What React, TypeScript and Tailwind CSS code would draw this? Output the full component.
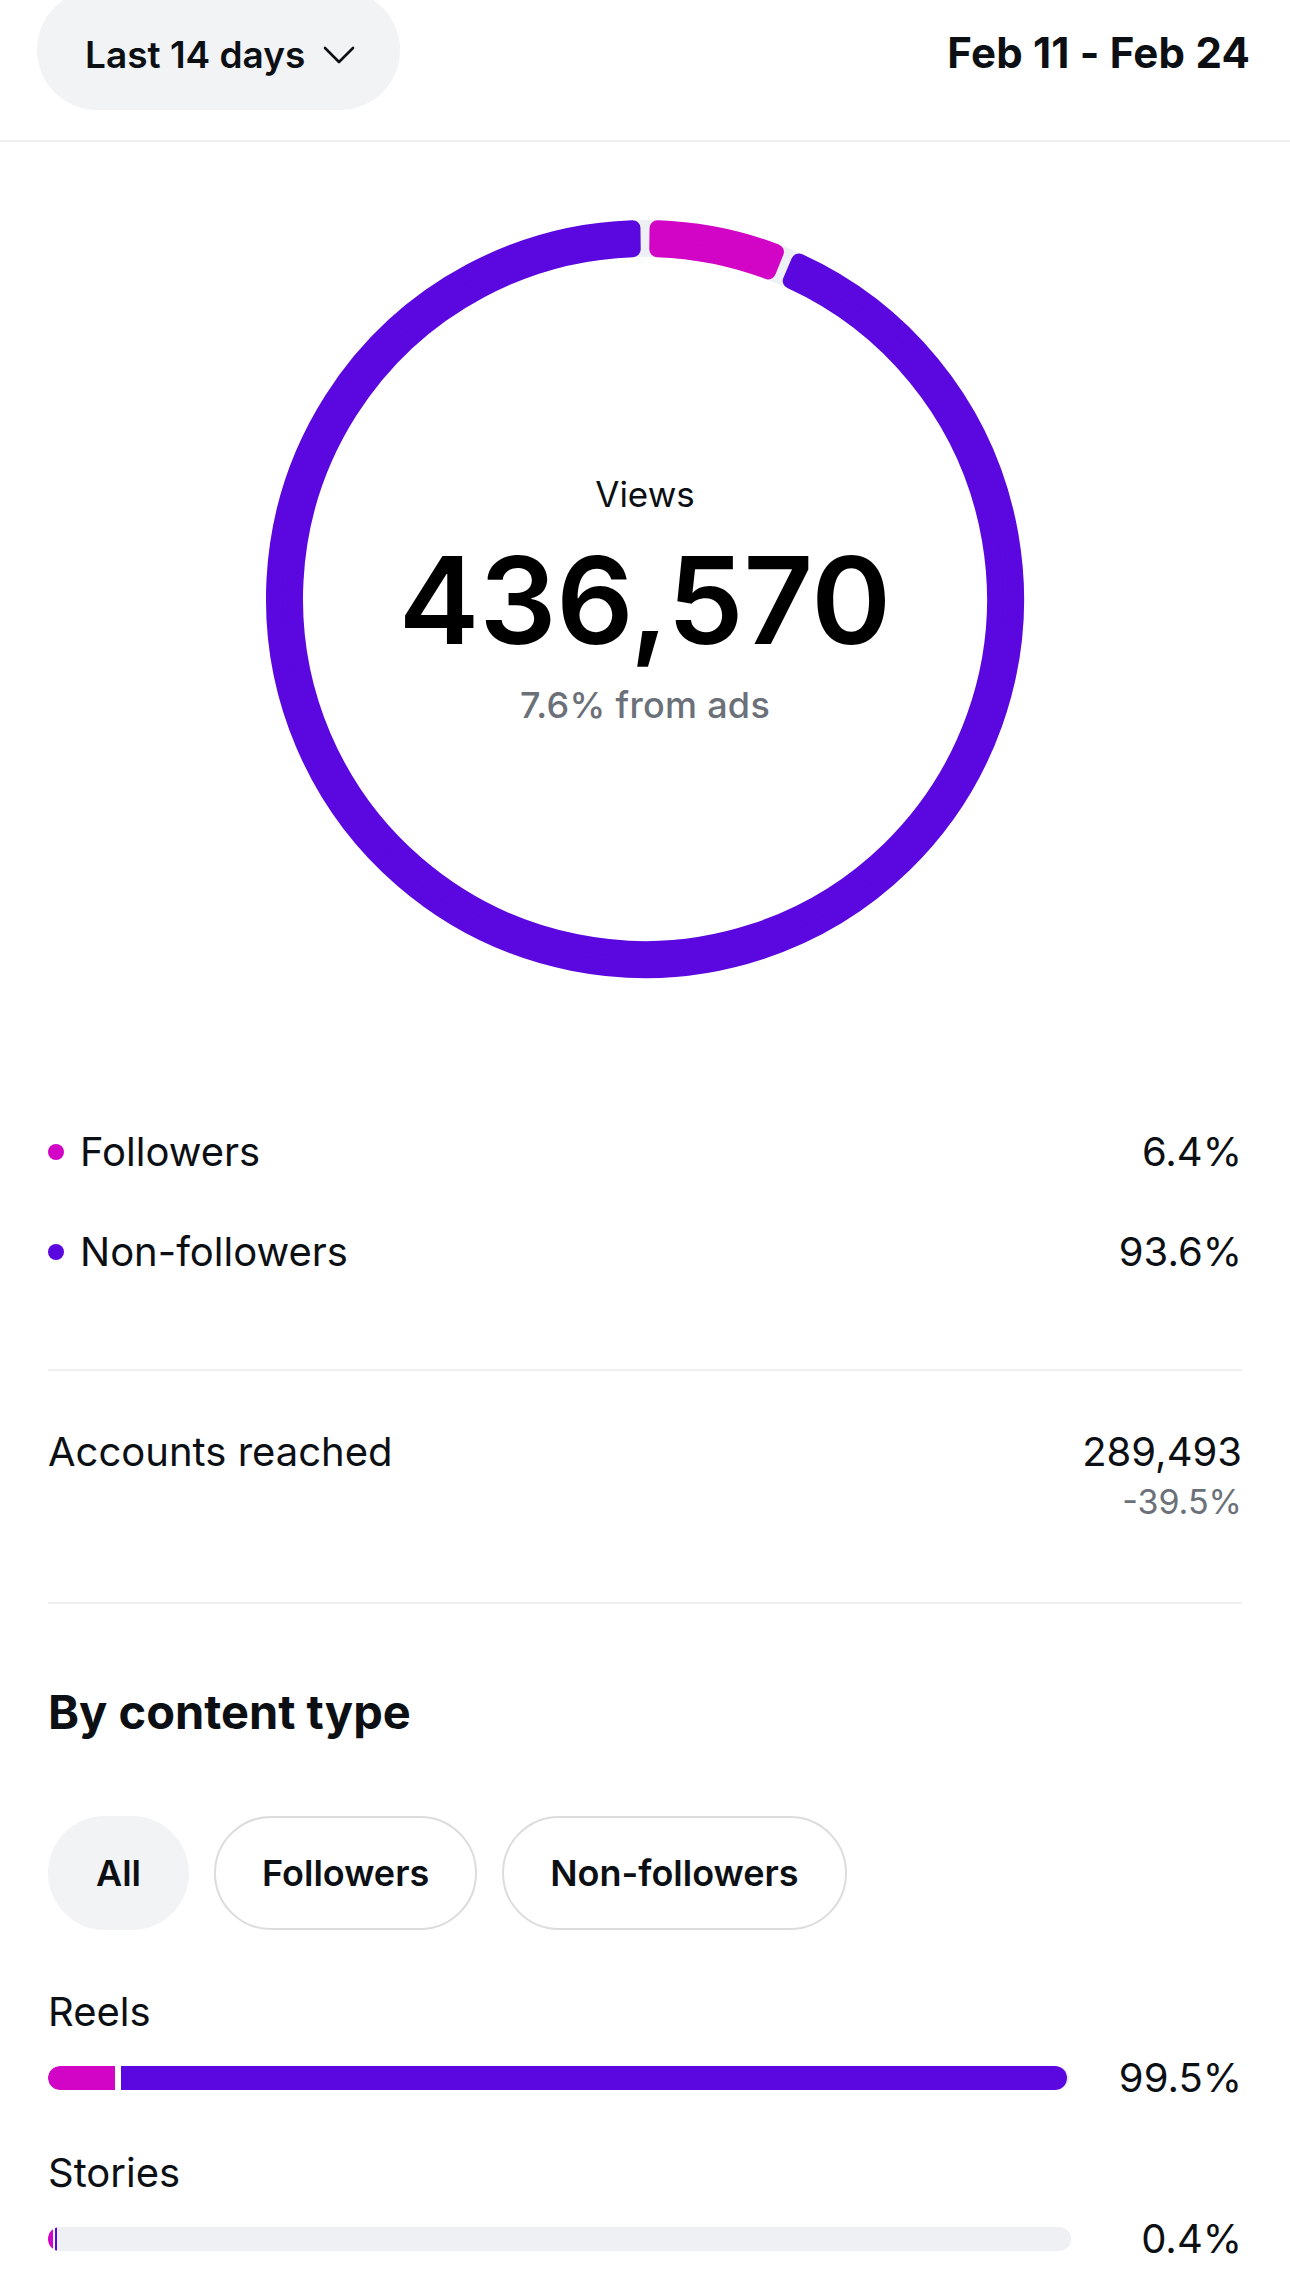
import React from "react";

const PURPLE = "#5a08df";
const PINK = "#d204c6";

// Annular sector with softened corners: the shape is inset by `pad`, then
// stroked with the same colour and round joins so each corner gets radius `pad`.
function sectorPath(
  cx: number,
  cy: number,
  r0: number,
  r1: number,
  a0: number,
  a1: number,
  pad: number
) {
  const ri = r0 + pad;
  const ro = r1 - pad;
  const rad = (d: number) => (d * Math.PI) / 180;
  const pt = (r: number, a: number) => [cx + r * Math.sin(a), cy - r * Math.cos(a)];
  const so = Math.asin(pad / ro);
  const si = Math.asin(pad / ri);
  const o0 = rad(a0) + so;
  const o1 = rad(a1) - so;
  const i0 = rad(a0) + si;
  const i1 = rad(a1) - si;
  const large = o1 - o0 > Math.PI ? 1 : 0;
  const largeI = i1 - i0 > Math.PI ? 1 : 0;
  const [x1, y1] = pt(ro, o0);
  const [x2, y2] = pt(ro, o1);
  const [x3, y3] = pt(ri, i1);
  const [x4, y4] = pt(ri, i0);
  return `M ${x1} ${y1} A ${ro} ${ro} 0 ${large} 1 ${x2} ${y2} L ${x3} ${y3} A ${ri} ${ri} 0 ${largeI} 0 ${x4} ${y4} Z`;
}

function Donut() {
  const c = 380;
  const rIn = 342;
  const rOut = 379;
  const pad = 8;
  const segs = [
    { a0: 0.7, a1: 21.9, color: PINK },
    { a0: 23.3, a1: 359.3, color: PURPLE },
  ];
  return (
    <svg width={760} height={760} viewBox="0 0 760 760">
      <circle cx={c} cy={c} r={(rIn + rOut) / 2} fill="none" stroke="#eef1f4" strokeWidth={rOut - rIn} />
      {segs.map((s, i) => (
        <path
          key={i}
          d={sectorPath(c, c, rIn, rOut, s.a0, s.a1, pad)}
          fill={s.color}
          stroke={s.color}
          strokeWidth={pad * 2}
          strokeLinejoin="round"
        />
      ))}
    </svg>
  );
}

function LegendRow({ color, label, value }: { color: string; label: string; value: string }) {
  return (
    <div className="flex h-[100px] items-center justify-between">
      <div className="flex items-center gap-[16px]">
        <span className="h-[16px] w-[16px] rounded-full" style={{ backgroundColor: color }} />
        <span className="text-[40px] leading-[48px]">{label}</span>
      </div>
      <span className="text-[40px] leading-[48px]">{value}</span>
    </div>
  );
}

function Chip({ label, active }: { label: string; active?: boolean }) {
  return (
    <div
      className={
        active
          ? "flex h-[114px] items-center rounded-full border-2 border-transparent bg-[#f2f3f5] px-[46px] text-[36px] font-semibold"
          : "flex h-[114px] items-center rounded-full border-2 border-[#dcdcdc] bg-white px-[46px] text-[36px] font-semibold"
      }
    >
      {label}
    </div>
  );
}

export default function App() {
  return (
    <div
      className="min-h-[2293px] w-[1290px] overflow-hidden bg-white text-[#0c1014]"
      style={{ fontFamily: "Inter, 'Noto Sans', sans-serif" }}
    >
      {/* Header: period selector + date range */}
      <div className="flex h-[142px] items-start justify-between border-b-2 border-[#eef0f3] pl-[37px] pr-[40px]">
        <div className="-mt-[10px] flex h-[120px] w-[363px] items-center gap-[18px] rounded-full bg-[#f2f3f5] pl-[48px] pt-[10px]">
          <span className="text-[37px] font-semibold leading-[44px]">Last 14 days</span>
          <svg width="32" height="18" viewBox="0 0 32 18" fill="none">
            <path d="M2 2 L16 16 L30 2" stroke="#0c1014" strokeWidth="2.6" strokeLinecap="round" strokeLinejoin="round" />
          </svg>
        </div>
        <div className="flex h-[104px] items-center text-[42px] font-bold tracking-[0.2px]">Feb 11 - Feb 24</div>
      </div>

      {/* Views ring */}
      <div className="mt-[77px] flex justify-center">
        <div className="relative h-[760px] w-[760px]">
          <Donut />
          <div className="absolute inset-0 flex flex-col items-center justify-center">
            <span className="text-[35px] leading-[44px]">Views</span>
            <span className="mt-[24px] text-[121px] font-semibold leading-[120px] text-black">436,570</span>
            <span className="mt-[23px] text-[36px] font-medium leading-[44px] tracking-[0.3px] text-[#6b7079]">
              7.6% from ads
            </span>
          </div>
        </div>
      </div>

      <div className="px-[48px]">
        {/* Audience split */}
        <div className="mt-[123px]">
          <LegendRow color={PINK} label="Followers" value="6.4%" />
          <LegendRow color={PURPLE} label="Non-followers" value="93.6%" />
        </div>

        <div className="mt-[67px] h-[2px] bg-[#eeeff2]" />

        {/* Reach */}
        <div className="flex justify-between pt-[57px]">
          <span className="text-[40px] leading-[48px]">Accounts reached</span>
          <div className="flex flex-col items-end">
            <span className="text-[40px] leading-[48px]">289,493</span>
            <span className="mt-[6px] text-[34px] leading-[40px] text-[#6b7079]">-39.5%</span>
          </div>
        </div>

        <div className="mt-[80px] h-[2px] bg-[#eeeff2]" />

        {/* Content type breakdown */}
        <h2 className="mt-[82px] text-[47px] font-bold leading-[52px]">By content type</h2>

        <div className="mt-[78px] flex gap-[25px]">
          <Chip label="All" active />
          <Chip label="Followers" />
          <Chip label="Non-followers" />
        </div>

        <div className="mt-[58px] text-[40px] leading-[48px]">Reels</div>
        <div className="mt-[18px] flex items-center justify-between">
          <div className="flex h-[24px] w-[1021px] overflow-hidden rounded-full bg-[#eff0f4]">
            <div className="h-full w-[67px] rounded-l-full" style={{ backgroundColor: PINK }} />
            <div className="h-full w-[6px] bg-white" />
            <div className="h-full w-[946px] rounded-r-full" style={{ backgroundColor: PURPLE }} />
          </div>
          <span className="text-[40px] leading-[48px]">99.5%</span>
        </div>

        <div className="mt-[47px] text-[40px] leading-[48px]">Stories</div>
        <div className="mt-[18px] flex items-center justify-between">
          <div className="flex h-[24px] w-[1023px] overflow-hidden rounded-full bg-[#eff0f4]">
            <div className="h-full w-[5px] rounded-l-full" style={{ backgroundColor: PINK }} />
            <div className="h-full w-[2px] bg-white" />
            <div className="h-full w-[2px]" style={{ backgroundColor: PURPLE }} />
          </div>
          <span className="text-[40px] leading-[48px]">0.4%</span>
        </div>
      </div>
    </div>
  );
}
